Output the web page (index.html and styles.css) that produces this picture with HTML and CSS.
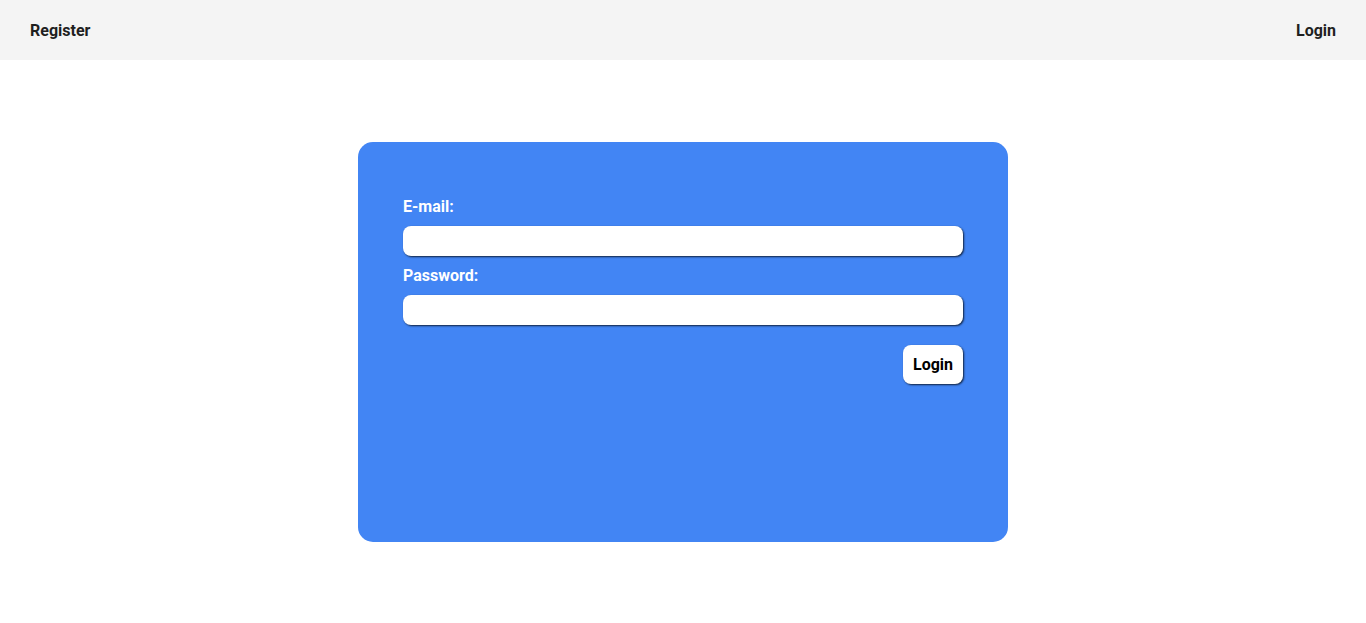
FILE: index.html
```html
<!DOCTYPE html>
<html lang="en">
<head>
<meta charset="utf-8">
<title>Login</title>
<link rel="stylesheet" href="styles.css">
</head>
<body>
<header class="topbar">
  <a class="nav-link" href="#">Register</a>
  <a class="nav-link" href="#">Login</a>
</header>
<main class="main">
  <form class="card">
    <label class="label" for="email">E-mail:</label>
    <input class="input" id="email" type="email">
    <label class="label" for="password">Password:</label>
    <input class="input" id="password" type="password">
    <div class="actions">
      <button class="btn" type="button">Login</button>
    </div>
  </form>
</main>
</body>
</html>
```
FILE: styles.css
```css
* { box-sizing: border-box; }
html, body { margin: 0; padding: 0; }
body {
  font-family: Roboto, "Liberation Sans", Arial, sans-serif;
  background: #ffffff;
  color: #222;
}
.topbar {
  height: 60px;
  background: #f4f4f4;
  display: flex;
  align-items: center;
  justify-content: space-between;
  padding: 0 30px;
}
.nav-link {
  font-size: 16px;
  font-weight: 700;
  color: #1f1f1f;
  text-decoration: none;
}
.main {
  display: flex;
  justify-content: center;
  padding-top: 82px;
}
.card {
  width: 650px;
  height: 400px;
  background: #4285f4;
  border-radius: 15px;
  padding: 55px 45px 0;
  display: flex;
  flex-direction: column;
}
.label {
  color: #ffffff;
  font-size: 16px;
  font-weight: 700;
  line-height: 19px;
  margin-bottom: 10px;
}
.input {
  height: 30px;
  border: none;
  border-radius: 8px;
  background: #ffffff;
  box-shadow: 1px 1px 2px rgba(0, 0, 0, 0.75);
  margin: 0 0 10px;
  padding: 0 10px;
  font-size: 16px;
  font-family: inherit;
  outline: none;
}
.actions {
  display: flex;
  justify-content: flex-end;
  margin-top: 10px;
}
.btn {
  height: 39px;
  padding: 0 10px;
  border: none;
  border-radius: 8px;
  background: #ffffff;
  box-shadow: 1px 1px 2px rgba(0, 0, 0, 0.75);
  font-family: inherit;
  font-size: 16px;
  font-weight: 700;
  color: #000;
  cursor: pointer;
}
```
